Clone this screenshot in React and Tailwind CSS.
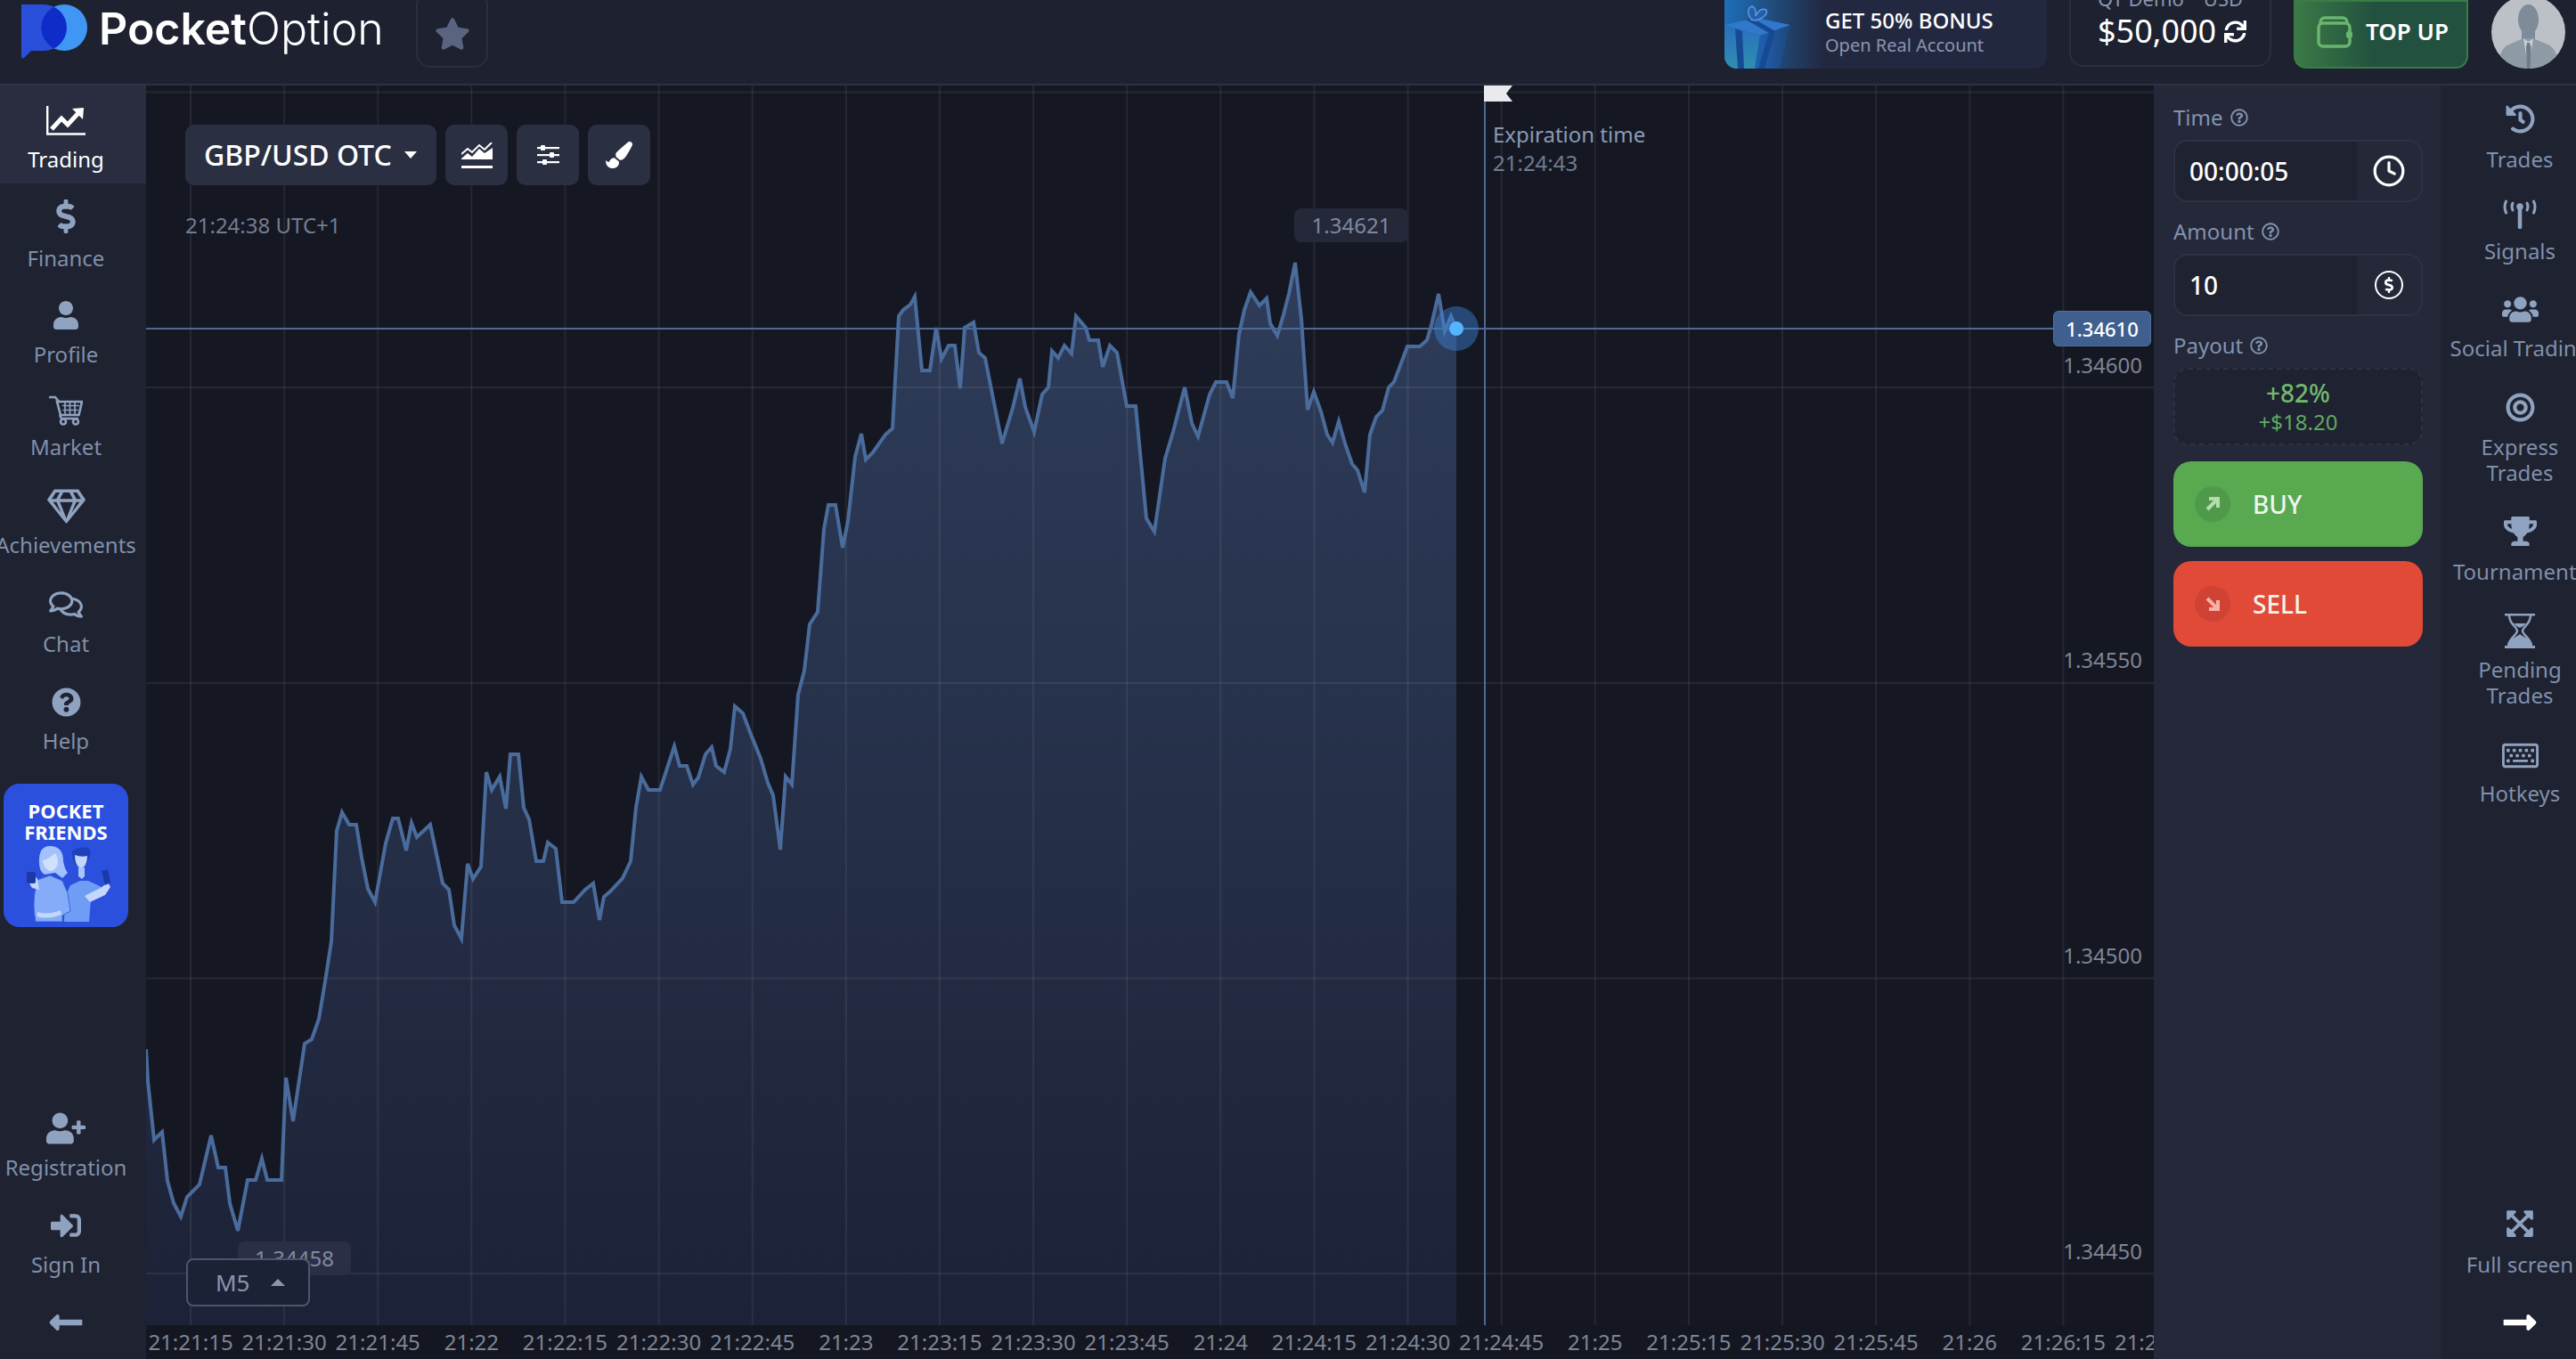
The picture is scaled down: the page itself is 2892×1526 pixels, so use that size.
import {
  FaBullseye,
  FaDollarSign,
  FaExpandArrowsAlt,
  FaHistory,
  FaLongArrowAltLeft,
  FaLongArrowAltRight,
  FaPaintBrush,
  FaQuestionCircle,
  FaRegComments,
  FaRegGem,
  FaRegKeyboard,
  FaRegQuestionCircle,
  FaSignInAlt,
  FaStar,
  FaSync,
  FaTrophy,
  FaUser,
  FaUserPlus,
  FaUsers,
} from "react-icons/fa";
import { Clock } from "lucide-react";

// price curve, in page pixels
const CURVE = [
  [164, 1178], [166, 1214], [173, 1280], [182, 1271], [188, 1326], [195, 1351], [203, 1366], [210, 1344],
  [224, 1330], [237, 1275], [245, 1311], [253, 1311], [258, 1351], [267, 1382], [278, 1325], [287, 1325],
  [294, 1301], [300, 1325], [316, 1325], [321, 1210], [329, 1259], [342, 1172], [350, 1167], [358, 1144],
  [365, 1102], [372, 1057], [378, 933], [384, 912], [392, 926], [400, 926], [406, 963], [413, 998],
  [421, 1013], [433, 947], [441, 919], [447, 919], [456, 955], [462, 924], [468, 940], [483, 926],
  [497, 992], [504, 999], [510, 1039], [518, 1054], [525, 970], [531, 987], [540, 973], [546, 867],
  [552, 887], [561, 872], [568, 908], [573, 847], [582, 847], [588, 907], [594, 920], [602, 967],
  [610, 967], [615, 946], [624, 953], [631, 1013], [644, 1013], [657, 999], [666, 992], [673, 1033],
  [678, 1007], [685, 1001], [699, 986], [708, 967], [714, 907], [720, 872], [728, 887], [741, 887],
  [757, 838], [763, 860], [771, 860], [778, 881], [784, 873], [792, 847], [799, 839], [804, 860],
  [813, 867], [820, 841], [825, 793], [834, 801], [842, 822], [854, 852], [862, 879], [868, 893],
  [876, 954], [882, 872], [889, 881], [896, 780], [903, 753], [909, 701], [918, 687], [925, 594],
  [930, 567], [938, 567], [946, 615], [952, 585], [960, 513], [967, 487], [972, 516], [980, 508],
  [994, 488], [1002, 481], [1009, 355], [1014, 348], [1022, 342], [1027, 333], [1035, 416], [1044, 416],
  [1051, 368], [1057, 403], [1065, 388], [1072, 388], [1078, 436], [1083, 368], [1093, 362], [1099, 396],
  [1106, 402], [1125, 498], [1137, 458], [1145, 425], [1151, 457], [1161, 485], [1170, 443], [1177, 435],
  [1181, 394], [1188, 402], [1195, 388], [1203, 397], [1208, 355], [1219, 368], [1223, 382], [1233, 382],
  [1238, 412], [1246, 388], [1254, 396], [1265, 456], [1275, 456], [1287, 582], [1296, 597], [1308, 515],
  [1317, 485], [1324, 458], [1330, 435], [1338, 475], [1345, 490], [1358, 443], [1365, 429], [1377, 429],
  [1384, 447], [1391, 375], [1397, 348], [1404, 328], [1414, 343], [1422, 335], [1426, 363], [1434, 377],
  [1441, 353], [1447, 330], [1454, 295], [1461, 358], [1468, 460], [1475, 440], [1483, 462], [1490, 488],
  [1496, 497], [1503, 473], [1510, 498], [1518, 521], [1524, 528], [1532, 553], [1538, 488], [1545, 468],
  [1552, 461], [1559, 435], [1565, 429], [1580, 389], [1594, 389], [1602, 382], [1607, 365], [1615, 330],
  [1622, 372], [1629, 355], [1635, 369],
];

const linePoints = CURVE.map((p) => p.join(",")).join(" ");
const fillPoints = `164,1488 ${linePoints} 1635,1488`;

const TICK_FIRST = 214;
const TICK_STEP = 105.12;
const TICKS = Array.from({ length: 22 }, (_, k) => {
  const total = 21 * 3600 + 21 * 60 + 15 + 15 * k;
  const h = Math.floor(total / 3600);
  const m = Math.floor((total % 3600) / 60);
  const s = total % 60;
  const label = s === 0 ? `${h}:${m}` : `${h}:${m}:${String(s).padStart(2, "0")}`;
  return { x: TICK_FIRST + TICK_STEP * k, label };
});

const H_LINES = [103.5, 435, 767, 1098.5, 1430];
const PRICES = [
  { label: "1.34600", y: 410 },
  { label: "1.34550", y: 741 },
  { label: "1.34500", y: 1073 },
  { label: "1.34450", y: 1405 },
];

function TradingIcon() {
  return (
    <svg width="44" height="33" viewBox="0 0 44 33" fill="none" stroke="currentColor">
      <path d="M1.200 0v31.500H44" strokeWidth="2.400" />
      <path d="M6 26l11-12 7 7 12-13" strokeWidth="5" />
      <path d="M29 3l13-1-1 13z" fill="currentColor" stroke="none" />
    </svg>
  );
}

function HourglassIcon() {
  return (
    <svg width="34" height="39" viewBox="0 0 34 39" fill="currentColor">
      <rect width="34" height="2.500" />
      <rect y="36" width="34" height="3" />
      <path d="M5 2c0 10 9 13 9 17.500S5 27 4 36M29 2c0 10-9 13-9 17.500S29 27 30 36" fill="none" stroke="currentColor" strokeWidth="2.500" />
      <path d="M3 36c1-7 9-9 14-13 5 4 13 6 14 13zM10 11h14q-3 4-7 5-4-1-7-5z" />
    </svg>
  );
}

function CartIcon() {
  return (
    <svg width="38" height="34" viewBox="0 0 38 34" fill="none" stroke="currentColor">
      <path d="M0 2h7l5 6" strokeWidth="2.6" />
      <path d="M9 7h28l-3.500 15H13z" strokeWidth="2.6" />
      <path d="M15 11.500h19M15.500 16.500h17M18 8v13M23.500 8v13M29 8v13" strokeWidth="1.700" />
      <path d="M12 22l2 4h19" strokeWidth="2.600" />
      <circle cx="16" cy="29.500" r="3" strokeWidth="2.600" />
      <circle cx="30" cy="29.500" r="3" strokeWidth="2.600" />
    </svg>
  );
}

function SignalIcon() {
  return (
    <svg width="38" height="33" viewBox="0 0 38 33" fill="none" stroke="currentColor" strokeLinecap="round">
      <path d="M19 9v22" strokeWidth="4.500" />
      <circle cx="19" cy="8" r="3.800" fill="currentColor" stroke="none" />
      <path d="M11 4q-2 4 0 8M27 4q2 4 0 8" strokeWidth="3" />
      <path d="M3.500 2q-3 6.500 0 13M34.500 2q3 6.500 0 13" strokeWidth="3" />
    </svg>
  );
}

function AreaIcon() {
  return (
    <svg width="35" height="29" viewBox="0 0 35 29" fill="white">
      <path d="M0 18l7-6 5 4 8-9 6 5 9-6v13H0z" />
      <path d="M0 13l7-6 5 4 8-8 6 5 8-8" fill="none" stroke="white" strokeWidth="2" />
      <rect x="0" y="26" width="35" height="3" />
    </svg>
  );
}

function SlidersIcon() {
  return (
    <svg width="25" height="22" viewBox="0 0 25 22" fill="white">
      <rect y="2" width="25" height="2.200" />
      <rect y="10" width="25" height="2.200" />
      <rect y="18" width="25" height="2.200" />
      <rect x="4" y="0" width="5" height="6" rx="1" />
      <rect x="14" y="8" width="5" height="6" rx="1" />
      <rect x="6" y="16" width="5" height="6" rx="1" />
    </svg>
  );
}

function WalletIcon() {
  return (
    <svg width="41" height="36" viewBox="0 0 41 36" fill="none" stroke="#6ab56e" strokeWidth="3.500">
      <rect x="2" y="8" width="35" height="26" rx="5" />
      <path d="M4 9V7a5 5 0 0 1 5-5h20a5 5 0 0 1 5 5v1" />
      <rect x="33" y="17" width="7" height="8" rx="3" fill="#6ab56e" stroke="none" />
    </svg>
  );
}

function Logo() {
  return (
    <svg width="76" height="62" viewBox="24 6 76 62">
      <defs>
        <clipPath id="logo-left">
          <path d="M24 6h25a26 26 0 0 1 0 52H35l-8 8q-3 1.500-3-2z" />
        </clipPath>
      </defs>
      <path d="M24 6h25a26 26 0 0 1 0 52H35l-8 8q-3 1.500-3-2z" fill="#2a4fdb" />
      <circle cx="72" cy="32" r="26" fill="#3f96f5" />
      <circle cx="72" cy="32" r="26" fill="#0f2cc9" clipPath="url(#logo-left)" />
    </svg>
  );
}

function GiftImage() {
  return (
    <svg className="absolute left-0 top-0" width="84" height="77" viewBox="0 0 84 77">
      <defs>
        <linearGradient id="gift-left" x1="0" y1="0" x2="0" y2="1">
          <stop offset="0" stopColor="#2a6fbe" />
          <stop offset="1" stopColor="#2f8fae" />
        </linearGradient>
        <linearGradient id="gift-right" x1="0" y1="0" x2="1" y2="0">
          <stop offset="0" stopColor="#1f62b8" />
          <stop offset="1" stopColor="#1c4f96" stopOpacity="0.4" />
        </linearGradient>
      </defs>
      <path d="M0 28l40 12-6 37H0z" fill="url(#gift-left)" />
      <path d="M40 40l34-12-12 49H34z" fill="url(#gift-right)" />
      <path d="M0 28l36-8 38 8-34 12z" fill="#2f78cc" />
      <path d="M12 32l3 45h7l-2-42zM50 37l-12 40h7l12-42z" fill="#174a94" />
      <path d="M24 22l26 15 7-2-26-15z" fill="#174a94" />
      <path d="M30 22q-7-12 1-15 5 2 4 11 5-10 12-7 3 7-12 12z" fill="#245fae" stroke="#5f9adc" strokeWidth="1.500" />
    </svg>
  );
}

function Avatar() {
  return (
    <div className="-mt-[5px] ml-[26px] h-[82px] w-[83px] shrink-0 overflow-hidden rounded-full bg-[#bcc1c8]">
      <svg width="83" height="82" viewBox="0 0 83 82">
        <ellipse cx="41.500" cy="27" rx="11.500" ry="17" fill="#7f8b99" />
        <path d="M34 38h15v12H34z" fill="#7f8b99" />
        <path d="M8 82q0-24 14-28l14-6h11l14 6q14 4 14 28z" fill="#8f9aa7" />
        <path d="M36 48l5.500 34L47 48l-5.500 4z" fill="#c9ced4" />
        <path d="M40 53h3l1.500 5-1 24h-3.500l-1-24z" fill="#6f7b89" />
      </svg>
    </div>
  );
}

function FriendsArt() {
  return (
    <svg className="mt-[1px]" width="100" height="88" viewBox="26 953 100 88">
      {/* man, behind */}
      <path d="M74 1041l1-28 6-13 11-5h9l15 7 4 6-16 8-2 25z" fill="#6f9df5" />
      <path d="M83 962q9-7 19-3 3 5 0 10l-3 8h-13q-3-8-3-15z" fill="#1e3fb8" />
      <path d="M86 966q7 3 14 1 0 12-7 14-7-2-7-15z" fill="#c3d6fc" />
      <path d="M90 980h7v10l-3 3-4-3z" fill="#a9c4fb" />
      <path d="M97 1012l18-9 8-6 3 5-6 9-17 8z" fill="#c3d6fc" />
      <path d="M116 984l7-2 3 15-6 3z" fill="#1b3aa8" />
      {/* woman, in front */}
      <path d="M42 1041q-4-20 0-38l-6-4 8-5 14-5 14 6 6 14 3 20-9 5v7z" fill="#84acf8" stroke="#3d66dc" strokeWidth="1" />
      <path d="M46 975q-1-19 12-19 15 0 15 17 2 10 5 13l-6 6-8-6-12 2q-6-4-6-13z" fill="#a3c1fb" />
      <path d="M50 972q6-1 14-8 3 4 3 9 0 9-8 11-8-2-9-12z" fill="#d0e0fd" />
      <path d="M38 1003l8 2-2-12-4-5-6 2 1 8z" fill="#c3d6fc" />
      <rect x="32" y="985" width="10" height="13" rx="2" fill="#1b3aa8" />
      <path d="M44 1030q12 4 26-2l1 5q-14 6-28 2z" fill="#c3d6fc" />
    </svg>
  );
}

function NavItem({ item, active }) {
  return (
    <div className={`flex flex-col items-center ${item.box} ${active ? "bg-[#292d3f] text-white" : "text-[#7f90ab]"}`}>
      <div className={`flex h-[44px] items-center justify-center ${active ? "text-white" : "text-[#8fa2bf]"}`}>{item.icon}</div>
      <span className="whitespace-pre-line text-center text-[24px] leading-[29px]">{item.label}</span>
    </div>
  );
}

const LEFT_TOP = [
  { label: "Trading", icon: <TradingIcon />, box: "h-[110px] pt-[17px] pr-[16px] gap-[7px]" },
  { label: "Finance", icon: <FaDollarSign size={38} />, box: "h-[126px] pt-[15px] pr-[16px] gap-[10px]" },
  { label: "Profile", icon: <FaUser size={32} />, box: "h-[107px] pr-[16px] gap-[7px]" },
  { label: "Market", icon: <CartIcon />, box: "h-[107px] pr-[16px] gap-[4px]" },
  { label: "Achievements", icon: <FaRegGem size={43} />, box: "h-[111px] pr-[16px] gap-[7px]" },
  { label: "Chat", icon: <FaRegComments size={38} />, box: "h-[109px] pr-[16px] gap-[7px]" },
  { label: "Help", icon: <FaQuestionCircle size={33} />, box: "h-[114px] pr-[16px] gap-[7px]" },
];

const LEFT_BOTTOM = [
  { label: "Registration", icon: <FaUserPlus size={44} />, box: "h-[109px] pr-[16px] gap-[7px]" },
  { label: "Sign In", icon: <FaSignInAlt size={34} />, box: "h-[109px] pr-[16px] gap-[7px]" },
];

const RIGHT_TOP = [
  { label: "Trades", icon: <FaHistory size={33} />, box: "h-[107px] gap-[9px]" },
  { label: "Signals", icon: <SignalIcon />, box: "h-[107px] gap-[5px]" },
  { label: "Social Trading", icon: <FaUsers size={41} />, box: "h-[110px] gap-[7px]" },
  { label: "Express\nTrades", icon: <FaBullseye size={33} />, box: "h-[139px] gap-[8px]" },
  { label: "Tournaments", icon: <FaTrophy size={37} />, box: "h-[112px] gap-[9px]" },
  { label: "Pending\nTrades", icon: <HourglassIcon />, box: "h-[140px] gap-[7px]" },
  { label: "Hotkeys", icon: <FaRegKeyboard size={41} />, box: "h-[100px] gap-[6px]" },
];

function LeftNav() {
  return (
    <aside className="flex w-[164px] shrink-0 flex-col bg-[#1f2230]">
      {LEFT_TOP.map((item, i) => (
        <NavItem key={item.label} item={item} active={i === 0} />
      ))}
      <div className="ml-[4px] flex h-[161px] w-[140px] flex-col items-center overflow-hidden rounded-[18px] bg-[#2b50de] pt-[18px]">
        <div className="text-center text-[22px] font-bold leading-[24px] text-white">
          POCKET
          <br />
          FRIENDS
        </div>
        <FriendsArt />
      </div>
      <div className="mt-auto">
        {LEFT_BOTTOM.map((item) => (
          <NavItem key={item.label} item={item} />
        ))}
        <div className="flex h-[44px] items-center justify-center pr-[16px] text-[#8fa2bf]">
          <FaLongArrowAltLeft size={42} />
        </div>
        <div className="h-[19px]" />
      </div>
    </aside>
  );
}

function RightNav() {
  return (
    <aside className="flex w-[152px] shrink-0 flex-col overflow-hidden bg-[#1f2230] pt-[15px]">
      <div className="flex w-[178px] flex-1 flex-col">
        {RIGHT_TOP.map((item) => (
          <NavItem key={item.label} item={item} />
        ))}
        <div className="mt-auto">
          <NavItem item={{ label: "Full screen", icon: <FaExpandArrowsAlt size={34} />, box: "h-[111px] gap-[9px]" }} />
          <div className="flex h-[44px] items-center justify-center text-white">
            <FaLongArrowAltRight size={42} />
          </div>
          <div className="h-[19px]" />
        </div>
      </div>
    </aside>
  );
}

function PanelLabel({ children }) {
  return (
    <div className="flex h-[30px] items-center gap-[8px] text-[24px] text-[#8293b0]">
      {children}
      <FaRegQuestionCircle size={20} />
    </div>
  );
}

function ValueBox({ value, icon }) {
  return (
    <div className="mt-[10px] flex h-[70px] overflow-hidden rounded-[16px] border-2 border-[#2d3145]">
      <div className="flex w-[204px] items-center bg-[#1f2230] pl-[16px] text-[28px] font-medium text-white">{value}</div>
      <div className="flex flex-1 items-center justify-center text-white">{icon}</div>
    </div>
  );
}

function TradeButton({ label, bg, circle, arrow, path }) {
  return (
    <div className={`flex h-[96px] items-center rounded-[20px] pl-[24px] ${bg}`}>
      <div className={`flex h-[40px] w-[40px] items-center justify-center rounded-full ${circle}`}>
        <svg width="18" height="18" viewBox="0 0 18 18" fill="none" stroke={arrow} strokeWidth="4">
          <path d={path} />
        </svg>
      </div>
      <span className="ml-[25px] text-[28px] font-medium text-[#f0f5ee]">{label}</span>
    </div>
  );
}

function TradePanel() {
  return (
    <section className="flex w-[322px] shrink-0 flex-col bg-[#252839] pl-[22px] pr-[20px] pt-[21px]">
      <PanelLabel>Time</PanelLabel>
      <ValueBox value="00:00:05" icon={<Clock size={38} strokeWidth={2} />} />
      <div className="mt-[18px]">
        <PanelLabel>Amount</PanelLabel>
      </div>
      <ValueBox
        value="10"
        icon={
          <span className="flex h-[32px] w-[32px] items-center justify-center rounded-full border-[2.5px] border-white">
            <FaDollarSign size={18} />
          </span>
        }
      />
      <div className="mt-[18px]">
        <PanelLabel>Payout</PanelLabel>
      </div>
      <div className="mt-[10px] flex h-[87px] flex-col items-center justify-center rounded-[16px] border-2 border-dashed border-[#2d3145] bg-[#1f2230]">
        <div className="text-[28px] font-medium leading-[34px] text-[#71b96f]">+82%</div>
        <div className="text-[24px] leading-[32px] text-[#5fa862]">+$18.20</div>
      </div>
      <div className="mt-[18px]">
        <TradeButton label="BUY" bg="bg-[#58a94f]" circle="bg-[#4f9a4a]" arrow="#b4dcae" path="M3 15L14 4M5 3h10v10" />
      </div>
      <div className="mt-[16px]">
        <TradeButton label="SELL" bg="bg-[#e24a38]" circle="bg-[#cf4234]" arrow="#f6b0a6" path="M3 3l11 11M15 5v10H5" />
      </div>
    </section>
  );
}

function ToolButton({ children }) {
  return <div className="flex h-[68px] w-[70px] items-center justify-center rounded-[10px] bg-[#2b2f42] text-white">{children}</div>;
}

function Plot() {
  return (
    <svg className="absolute inset-0" width="2254" height="1392" viewBox="164 96 2254 1392">
      <defs>
        <linearGradient id="area-fill" gradientUnits="userSpaceOnUse" x1="0" y1="330" x2="0" y2="1488">
          <stop offset="0" stopColor="#2e3c59" />
          <stop offset="1" stopColor="#1c2237" />
        </linearGradient>
      </defs>
      <polygon points={fillPoints} fill="url(#area-fill)" />
      {TICKS.map((t) => (
        <line key={t.label} x1={t.x} x2={t.x} y1="96" y2="1488" stroke="#ffffff" strokeOpacity="0.07" strokeWidth="2" />
      ))}
      {H_LINES.map((y) => (
        <line key={y} x1="164" x2="2418" y1={y} y2={y} stroke="#ffffff" strokeOpacity="0.07" strokeWidth="2" />
      ))}
      <polyline points={linePoints} fill="none" stroke="#4a6c9c" strokeWidth="4" />
      <line x1="164" x2="2310" y1="369" y2="369" stroke="#4d6a96" strokeWidth="2" />
      <line x1="1667" x2="1667" y1="96" y2="1488" stroke="#4d6a96" strokeWidth="2" />
      <path d="M1666 96h32l-7 9 7 9h-32z" fill="#e8eaee" />
      <circle cx="1635" cy="369" r="25" fill="#3b82d6" fillOpacity="0.45" />
      <circle cx="1635" cy="369" r="8" fill="#55b4ff" />
    </svg>
  );
}

function Chart() {
  return (
    <main className="flex min-w-0 flex-1 flex-col bg-[#151823]">
      <div className="relative flex-1 overflow-hidden">
        <Plot />

        <div className="absolute left-[44px] top-[44px] flex gap-[10px]">
          <div className="flex h-[68px] w-[282px] items-center rounded-[10px] bg-[#2b2f42] pl-[21px] text-[32px] font-medium text-white">
            GBP/USD OTC
            <span className="ml-[14px] h-0 w-0 border-x-[7px] border-t-[8px] border-x-transparent border-t-white" />
          </div>
          <ToolButton>
            <AreaIcon />
          </ToolButton>
          <ToolButton>
            <SlidersIcon />
          </ToolButton>
          <ToolButton>
            <FaPaintBrush size={30} />
          </ToolButton>
        </div>

        <div className="absolute left-[44px] top-[141px] text-[24px] leading-[32px] text-[#737d90]">21:24:38 UTC+1</div>

        <div className="absolute left-[1512px] top-[39px] text-[24px] leading-[32px]">
          <div className="text-[#8a9bb5]">Expiration time</div>
          <div className="text-[#6f7c91]">21:24:43</div>
        </div>

        <div className="absolute left-[1289px] top-[138px] flex h-[38px] w-[128px] items-center justify-center rounded-[8px] bg-[#252839] text-[24px] text-[#7f8aa0]">
          1.34621
        </div>
        <div className="absolute left-[103px] top-[1298px] flex h-[38px] w-[127px] items-center justify-center rounded-[8px] bg-[#2a2f47] text-[24px] text-[#7f8aa0]">
          1.34458
        </div>
        <div className="absolute left-[45px] top-[1317px] flex h-[54px] w-[139px] items-center rounded-[8px] border-2 border-[#4a5670] bg-[#1c2235] pl-[31px] text-[26px] text-[#8a96ad]">
          M5
          <span className="ml-[24px] h-0 w-0 border-x-[8px] border-b-[8px] border-x-transparent border-b-[#8a96ad]" />
        </div>

        {PRICES.map((p) => (
          <div
            key={p.label}
            className="absolute right-[13px] -translate-y-1/2 text-[24px] leading-[30px] text-[#7f8594]"
            style={{ top: p.y - 96 }}
          >
            {p.label}
          </div>
        ))}

        <div className="absolute left-[2141px] top-[253px] flex h-[40px] w-[110px] items-center justify-center rounded-[6px] border border-[#4f6f9f] bg-[#3f5f8f] text-[22px] font-medium text-white">
          1.34610
        </div>
      </div>

      <div className="relative h-[38px] shrink-0 overflow-hidden bg-[#141722]">
        {TICKS.map((t) => (
          <span
            key={t.label}
            className="absolute top-0 -translate-x-1/2 whitespace-nowrap text-[24px] leading-[38px] text-[#7f8594]"
            style={{ left: t.x - 164 }}
          >
            {t.label}
          </span>
        ))}
      </div>
    </main>
  );
}

function Header() {
  return (
    <header className="flex h-[96px] shrink-0 items-start justify-between overflow-hidden border-b-2 border-[#2e3244] bg-[#1e2130] pl-[24px] pr-[12px]">
      <div className="flex items-start">
        <div className="mt-[6px] flex h-[60px] items-center gap-[11px]">
          <Logo />
          <div className="w-[318px] whitespace-nowrap pb-[8px] font-['Inter',sans-serif] text-[50px] leading-none text-white">
            <span className="font-semibold">Pocket</span>
            <span className="font-light">Option</span>
          </div>
        </div>
        <div className="-mt-[10px] ml-[38px] flex h-[86px] w-[81px] items-center justify-center rounded-[16px] border-2 border-[#2a2e42] pt-[10px] text-[#5a6480]">
          <FaStar size={40} />
        </div>
      </div>

      <div className="flex items-start">
        <div className="relative h-[77px] w-[362px] overflow-hidden rounded-b-[14px] bg-[#232841] pl-[113px]">
          <div className="absolute inset-y-0 left-0 w-[110px] bg-gradient-to-r from-[#1d6fb8] to-transparent" />
          <GiftImage />
          <div className="pt-[7px] text-[24px] font-medium leading-[32px] text-white">GET 50% BONUS</div>
          <div className="text-[20px] leading-[24px] text-[#8a96ad]">Open Real Account</div>
        </div>

        <div className="-mt-[25px] ml-[25px] flex h-[100px] w-[227px] flex-col rounded-[16px] border-2 border-[#2a2e42] pl-[30px]">
          <div className="flex h-[42px] shrink-0 items-center gap-[22px] text-[22px] text-[#8a96ad]">
            <span>QT Demo</span>
            <span>USD</span>
          </div>
          <div className="flex h-[32px] items-center gap-[9px] text-[36px] text-white">
            $50,000
            <FaSync size={25} />
          </div>
        </div>

        <div className="ml-[25px] flex h-[77px] w-[196px] items-center rounded-b-[14px] border-2 border-[#3a7d44] bg-gradient-to-r from-[#3c7a46] to-[#22523f] to-45% pb-[6px] pl-[24px]">
          <WalletIcon />
          <span className="ml-[14px] text-[26px] font-semibold text-white">TOP UP</span>
        </div>

        <Avatar />
      </div>
    </header>
  );
}

export default function App() {
  return (
    <div className="flex h-screen w-screen flex-col overflow-hidden bg-[#1e2130] font-['Noto_Sans',sans-serif]">
      <Header />
      <div className="flex min-h-0 flex-1">
        <LeftNav />
        <Chart />
        <TradePanel />
        <RightNav />
      </div>
    </div>
  );
}
